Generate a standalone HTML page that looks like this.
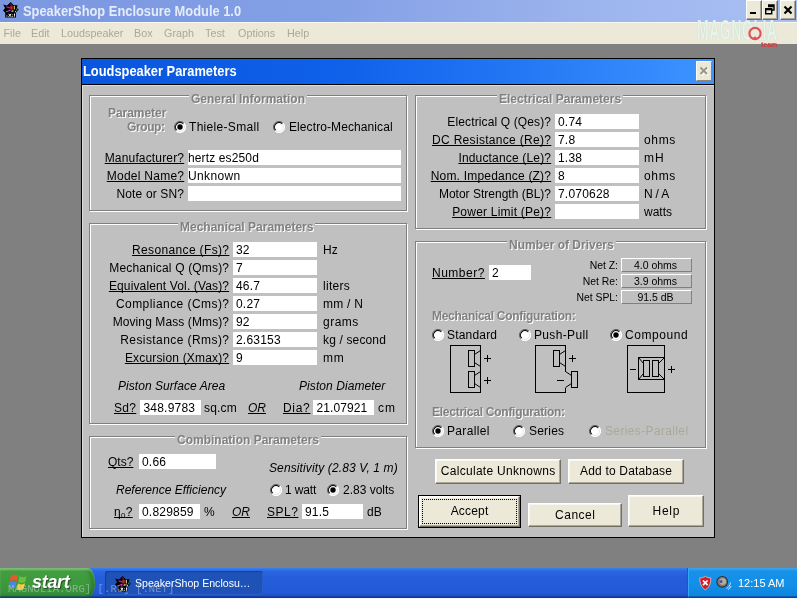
<!DOCTYPE html>
<html><head><meta charset="utf-8"><title>SpeakerShop Enclosure Module 1.0</title>
<style>
html,body{margin:0;padding:0}
body{width:797px;height:599px;overflow:hidden;position:relative;background:#808080;will-change:transform;font-family:"Liberation Sans",sans-serif;font-size:12px;color:#000;line-height:15px}
.a{position:absolute;white-space:nowrap}
.tb{left:0;top:0;width:797px;height:22px;background:linear-gradient(90deg,#7b97e0 0%,#839fe5 40%,#9fb7ef 78%,#a8bff3 100%)}
.tt{left:23px;top:2.5px;font-weight:bold;font-size:14px;color:#e4ebfb;line-height:17px;transform-origin:0 0;transform:scaleX(.919)}
.mb{left:0;top:22px;width:797px;height:22px;background:#ece9d8;box-shadow:inset 0 1px 0 #f7f6ef}
.mi{top:26px;font-size:10.8px;color:#aca899;line-height:14px}
.tbtn{width:16px;height:20px;background:#ece9d8;box-sizing:border-box;border:1px solid;border-color:#fff #6d6c62 #6d6c62 #fff;box-shadow:inset -1px -1px 0 #aca899}
.tbtn svg{position:absolute;left:-1px;top:-1px}
.dlg{left:81px;top:58px;width:634px;height:480px;background:#000}
.dt{left:82px;top:59px;width:632px;height:25px;background:linear-gradient(90deg,#0a56de 0%,#0f60ea 40%,#2478f5 70%,#3d94ff 100%)}
.dtt{left:83px;top:62.5px;font-weight:bold;font-size:14px;color:#fff;line-height:17px;transform-origin:0 0;transform:scaleX(.918)}
.db{left:82px;top:85px;width:632px;height:452px;background:#c0c0c0;box-shadow:inset 1px 1px 0 #dcdcdc}
.gb{border:1px solid #808080;box-shadow:1px 1px 0 #fff, inset 1px 1px 0 #fff;box-sizing:border-box}
.cap{font-weight:bold;color:#808080;text-shadow:1px 1px 0 #fff;background:#c0c0c0;padding:0 2px;line-height:14px}
.eg{font-weight:bold;color:#808080;text-shadow:1px 1px 0 #fff;line-height:14px}
.l{text-align:right;line-height:15px}
.dis{color:#aca899}
.u{text-decoration:underline;text-decoration-skip-ink:none;text-underline-offset:1px;text-decoration-thickness:1px}
.in{background:#fff;height:15px;line-height:17px;padding-left:3px;box-sizing:border-box}
.it{font-style:italic}
.rd{width:12px;height:12px;border-radius:50%;background:#fff;box-sizing:border-box;border:1px solid;border-color:#707070 #fff #fff #707070;box-shadow:inset 1px 1px 0 0 #000, inset -1px -1px 0 0 #dfdfdf}
.rd.on::after{content:"";position:absolute;left:2px;top:2px;width:6px;height:6px;border-radius:50%;background:#000}
.btn{background:#ece9d8;box-sizing:border-box;border:1px solid;border-color:#fff #716f64 #716f64 #fff;box-shadow:inset -1px -1px 0 #aca899, inset 1px 1px 0 #f8f7f1;text-align:center}
.ro{background:#c0c0c0;box-sizing:border-box;border:1px solid;border-color:#fff #808080 #808080 #fff;text-align:center;line-height:12px;height:14px;font-size:10.5px}
.task{left:0;top:568px;width:797px;height:31px;background:linear-gradient(180deg,#3a80f0 0%,#2a66e2 10%,#245edb 30%,#2259d6 80%,#1c48b8 100%)}
</style></head><body>

<div class="a tb"></div>
<div class="a tt">SpeakerShop Enclosure Module 1.0</div>
<div class="a mb"></div>
<div class="a mi" style="left:3.5px">File</div>
<div class="a mi" style="left:31px">Edit</div>
<div class="a mi" style="left:61px">Loudspeaker</div>
<div class="a mi" style="left:134px">Box</div>
<div class="a mi" style="left:164px">Graph</div>
<div class="a mi" style="left:205px">Test</div>
<div class="a mi" style="left:238px">Options</div>
<div class="a mi" style="left:287px">Help</div>
<svg class="a" style="left:3px;top:2px" width="16" height="16" viewBox="0 0 16 16"><path d="M.2 2.400L4 3.500 7.800 0 10.500 3 14.600 3.200 13.800 6 15.800 7.600 13 10.400V15.600H2.200V10.400L0 8.800 2 6z" fill="#000"/><path d="M3.500 4.300L8 5.600 7.600 6.800 3.400 5.600z" fill="#b020b8"/><path d="M2.800 9.600L7.400 7.400 7.800 8.600 3.600 10.200z" fill="#e838d8"/><path d="M7.200 1.500L8.400 1.200 8.800 3.400 7.800 3.600z" fill="#a01878"/><path d="M7.400 4L9.600 3.600 9.800 7.400 7.800 7.600z" fill="#d02424"/><path d="M10.800 3.800H11.800V7.600H10.800z" fill="#f2ea90"/><path d="M8.600 8.400L10.400 8.200 10.600 9.800 8.400 9.800z" fill="#e0d84a"/><path d="M13.400 6.600L14.800 6.800 14 8.600 12.800 8.200z" fill="#2c9a34"/><path d="M12 9.200h1v1h-1z" fill="#fff"/><path d="M3.400 13.600h1v1h-1zM9.200 12.400h.9v.9h-.9zM9.200 13.900h.9v.9h-.9z" fill="#fff"/><path d="M5.600 11.800l2.600 3M8.200 11.800l-2.600 3M11.500 11.600v2.200M11.500 14.300v.6" stroke="#fff" stroke-width="1" fill="none"/></svg>
<div class="a tbtn" style="left:746px;top:0px"><svg width="16" height="20" viewBox="0 0 16 20"><path d="M4 12h6v2H4z" fill="#000"/></svg></div>
<div class="a tbtn" style="left:762px;top:0px"><svg width="16" height="20" viewBox="0 0 16 20"><path d="M6 5h6v5h-2M6 6.5h6" stroke="#000" stroke-width="1.4" fill="none"/><path d="M3.7 8.7h6v5h-6z" fill="#ece9d8" stroke="#000" stroke-width="1.4"/><path d="M3.7 9.5h6" stroke="#000" stroke-width="1.6"/></svg></div>
<div class="a tbtn" style="left:780px;top:0px"><svg width="16" height="20" viewBox="0 0 16 20"><path d="M4.5 6.5l7 7M11.5 6.5l-7 7" stroke="#000" stroke-width="2.2"/></svg></div>
<div class="a" style="left:697px;top:15px;font-size:30px;line-height:30px;font-weight:bold;color:rgba(238,249,243,.88);transform-origin:0 0;transform:scaleX(.47);letter-spacing:1px;text-shadow:0 0 1px rgba(140,185,165,.7)">MAGNOLIA</div>
<svg class="a" style="left:746px;top:25px" width="18" height="18" viewBox="0 0 18 18"><circle cx="9" cy="8.5" r="5.6" fill="#ece9d8" stroke="#e0525a" stroke-width="2.2"/><circle cx="9" cy="13" r="1.6" fill="#e0525a"/></svg>
<div class="a" style="left:761px;top:41px;font-size:7px;line-height:8px;font-weight:bold;color:#d03a40">team</div>
<div class="a dlg"></div><div class="a dt"></div><div class="a dtt">Loudspeaker Parameters</div><div class="a db"></div>
<div class="a" style="left:696px;top:61px;width:16px;height:20px;background:#ece9d8;box-sizing:border-box;border:1px solid;border-color:#fff #8a887a #8a887a #fff"><svg width="14" height="18" viewBox="0 0 14 18" style="position:absolute;left:0;top:0"><path d="M4.500 6.500l6.500 6.500M11 6.500l-6.500 6.500" stroke="#fff" stroke-width="1.800"/><path d="M3.500 5.500l6.500 6.500M10 5.500l-6.500 6.500" stroke="#96948a" stroke-width="1.800"/></svg></div>
<div class="a gb" style="left:89px;top:95px;width:318px;height:116px"></div>
<div class="a cap" style="left:189px;top:93px;line-height:12px;height:12px">General Information</div>
<div class="a eg" style="left:108px;top:106px;letter-spacing:-0.05px">Parameter</div>
<div class="a eg" style="left:127px;top:120px;letter-spacing:-0.4px">Group:</div>
<svg class="a" style="left:174px;top:121px" width="12" height="12" viewBox="0 0 12 12"><circle cx="6" cy="6" r="5.5" fill="#fff"/><path d="M2.1 9.9A5.5 5.5 0 0 1 9.9 2.1" stroke="#5a5a5a" stroke-width="1" fill="none"/><path d="M9.9 2.1A5.5 5.5 0 0 1 2.1 9.9" stroke="#fff" stroke-width="1.2" fill="none"/><path d="M2.8 9.2A4.5 4.500 0 0 1 9.2 2.8" stroke="#000" fill="none" stroke-width="1.1"/><path d="M9.2 2.8A4.5 4.500 0 0 1 2.800 9.2" stroke="#e4e4e4" fill="none"/><circle cx="6" cy="6" r="2.7" fill="#000"/></svg>
<div class="a" style="left:189px;top:120px;letter-spacing:0.31px">Thiele-Small</div>
<svg class="a" style="left:273px;top:121px" width="12" height="12" viewBox="0 0 12 12"><circle cx="6" cy="6" r="5.5" fill="#fff"/><path d="M2.1 9.9A5.5 5.5 0 0 1 9.9 2.1" stroke="#5a5a5a" stroke-width="1" fill="none"/><path d="M9.9 2.1A5.5 5.5 0 0 1 2.1 9.9" stroke="#fff" stroke-width="1.2" fill="none"/><path d="M2.8 9.2A4.5 4.500 0 0 1 9.2 2.8" stroke="#000" fill="none" stroke-width="1.1"/><path d="M9.2 2.8A4.5 4.500 0 0 1 2.800 9.2" stroke="#e4e4e4" fill="none"/></svg>
<div class="a" style="left:289px;top:120px;letter-spacing:0.09px">Electro-Mechanical</div>
<div class="a l u" style="right:612.84px;top:151px;letter-spacing:0.16px">Manufacturer?</div>
<div class="a in" style="left:188px;top:150px;width:213px;padding-left:0px;letter-spacing:0.13px">hertz es250d</div>
<div class="a l u" style="right:612.74px;top:169px;letter-spacing:0.26px">Model Name?</div>
<div class="a in" style="left:188px;top:168px;width:213px;padding-left:0px;letter-spacing:0.35px">Unknown</div>
<div class="a l" style="right:612.85px;top:187px;letter-spacing:0.15px">Note or SN?</div>
<div class="a in" style="left:188px;top:186px;width:213px;padding-left:0px"></div>
<div class="a gb" style="left:89px;top:223px;width:318px;height:201px"></div>
<div class="a cap" style="left:178px;top:221px;line-height:12px;height:12px">Mechanical Parameters</div>
<div class="a l u" style="right:567.65px;top:243px;letter-spacing:0.35px">Resonance (Fs)?</div>
<div class="a in" style="left:233px;top:242px;width:84px;padding-left:3px;letter-spacing:0.2px">32</div>
<div class="a" style="left:323px;top:243px">Hz</div>
<div class="a l" style="right:567.83px;top:261px;letter-spacing:0.17px">Mechanical Q (Qms)?</div>
<div class="a in" style="left:233px;top:260px;width:84px;padding-left:3px;letter-spacing:0.2px">7</div>
<div class="a l u" style="right:567.86px;top:279px;letter-spacing:0.14px">Equivalent Vol. (Vas)?</div>
<div class="a in" style="left:233px;top:278px;width:84px;padding-left:3px;letter-spacing:0.2px">46.7</div>
<div class="a" style="left:323px;top:279px;letter-spacing:0.3px">liters</div>
<div class="a l" style="right:567.56px;top:297px;letter-spacing:0.44px">Compliance (Cms)?</div>
<div class="a in" style="left:233px;top:296px;width:84px;padding-left:3px;letter-spacing:0.2px">0.27</div>
<div class="a" style="left:323px;top:297px;letter-spacing:0.25px">mm / N</div>
<div class="a l" style="right:567.9px;top:315px;letter-spacing:0.1px">Moving Mass (Mms)?</div>
<div class="a in" style="left:233px;top:314px;width:84px;padding-left:3px;letter-spacing:0.2px">92</div>
<div class="a" style="left:323px;top:315px;letter-spacing:0.5px">grams</div>
<div class="a l" style="right:567.58px;top:333px;letter-spacing:0.42px">Resistance (Rms)?</div>
<div class="a in" style="left:233px;top:332px;width:84px;padding-left:3px;letter-spacing:0.2px">2.63153</div>
<div class="a" style="left:323px;top:333px;letter-spacing:0.15px">kg / second</div>
<div class="a l u" style="right:567.83px;top:351px;letter-spacing:0.17px">Excursion (Xmax)?</div>
<div class="a in" style="left:233px;top:350px;width:84px;padding-left:3px;letter-spacing:0.2px">9</div>
<div class="a" style="left:323px;top:351px;letter-spacing:0.8px">mm</div>
<div class="a it" style="left:118px;top:379px;letter-spacing:0.05px">Piston Surface Area</div>
<div class="a it" style="left:299px;top:379px;letter-spacing:0.07px">Piston Diameter</div>
<div class="a u" style="left:114px;top:401px;letter-spacing:0.3px">Sd?</div>
<div class="a in" style="left:140px;top:400px;width:61px;padding-left:3.5px;letter-spacing:0.2px">348.9783</div>
<div class="a" style="left:204px;top:401px;letter-spacing:0.2px">sq.cm</div>
<div class="a it u" style="left:248px;top:401px">OR</div>
<div class="a u" style="left:283px;top:401px;letter-spacing:0.7px">Dia?</div>
<div class="a in" style="left:313px;top:400px;width:61px;padding-left:3.5px;letter-spacing:0.1px">21.07921</div>
<div class="a" style="left:378px;top:401px;letter-spacing:1px">cm</div>
<div class="a gb" style="left:89px;top:436px;width:318px;height:93px"></div>
<div class="a cap" style="left:175px;top:434px;line-height:12px;height:12px">Combination Parameters</div>
<div class="a u" style="left:108px;top:455px">Qts?</div>
<div class="a in" style="left:139px;top:454px;width:77px;padding-left:3px;letter-spacing:0.2px">0.66</div>
<div class="a it" style="left:269px;top:461px;letter-spacing:0.12px">Sensitivity (2.83 V, 1 m)</div>
<div class="a it" style="left:116px;top:483px">Reference Efficiency</div>
<svg class="a" style="left:270px;top:484px" width="12" height="12" viewBox="0 0 12 12"><circle cx="6" cy="6" r="5.5" fill="#fff"/><path d="M2.1 9.9A5.5 5.5 0 0 1 9.9 2.1" stroke="#5a5a5a" stroke-width="1" fill="none"/><path d="M9.9 2.1A5.5 5.5 0 0 1 2.1 9.9" stroke="#fff" stroke-width="1.2" fill="none"/><path d="M2.8 9.2A4.5 4.500 0 0 1 9.2 2.8" stroke="#000" fill="none" stroke-width="1.1"/><path d="M9.2 2.8A4.5 4.500 0 0 1 2.800 9.2" stroke="#e4e4e4" fill="none"/></svg>
<div class="a" style="left:285px;top:483px;letter-spacing:-0.15px">1 watt</div>
<svg class="a" style="left:327px;top:484px" width="12" height="12" viewBox="0 0 12 12"><circle cx="6" cy="6" r="5.5" fill="#fff"/><path d="M2.1 9.9A5.5 5.5 0 0 1 9.9 2.1" stroke="#5a5a5a" stroke-width="1" fill="none"/><path d="M9.9 2.1A5.5 5.5 0 0 1 2.1 9.9" stroke="#fff" stroke-width="1.2" fill="none"/><path d="M2.8 9.2A4.5 4.500 0 0 1 9.2 2.8" stroke="#000" fill="none" stroke-width="1.1"/><path d="M9.2 2.8A4.5 4.500 0 0 1 2.800 9.2" stroke="#e4e4e4" fill="none"/><circle cx="6" cy="6" r="2.7" fill="#000"/></svg>
<div class="a" style="left:343px;top:483px">2.83 volts</div>
<div class="a u" style="left:114px;top:505px;letter-spacing:0.3px">&eta;<span style="font-size:8px;vertical-align:-2px">0</span>?</div>
<div class="a in" style="left:139px;top:504px;width:61px;padding-left:3px;letter-spacing:0.2px">0.829859</div>
<div class="a" style="left:204px;top:505px">%</div>
<div class="a it u" style="left:232px;top:505px">OR</div>
<div class="a u" style="left:267px;top:505px;letter-spacing:0.5px">SPL?</div>
<div class="a in" style="left:302px;top:504px;width:61px;padding-left:3px;letter-spacing:0.2px">91.5</div>
<div class="a" style="left:367px;top:505px">dB</div>
<div class="a gb" style="left:415px;top:95px;width:291px;height:134px"></div>
<div class="a cap" style="left:497px;top:93px;line-height:12px;height:12px">Electrical Parameters</div>
<div class="a l" style="right:245.87px;top:115px;letter-spacing:0.13px">Electrical Q (Qes)?</div>
<div class="a in" style="left:555px;top:114px;width:84px;padding-left:3px;letter-spacing:0.2px">0.74</div>
<div class="a l u" style="right:245.69px;top:133px;letter-spacing:0.31px">DC Resistance (Re)?</div>
<div class="a in" style="left:555px;top:132px;width:84px;padding-left:3px;letter-spacing:0.2px">7.8</div>
<div class="a" style="left:644px;top:133px;letter-spacing:0.67px">ohms</div>
<div class="a l u" style="right:245.83px;top:151px;letter-spacing:0.17px">Inductance (Le)?</div>
<div class="a in" style="left:555px;top:150px;width:84px;padding-left:3px;letter-spacing:0.2px">1.38</div>
<div class="a" style="left:644px;top:151px;letter-spacing:1px">mH</div>
<div class="a l u" style="right:245.8px;top:169px;letter-spacing:0.2px">Nom. Impedance (Z)?</div>
<div class="a in" style="left:555px;top:168px;width:84px;padding-left:3px;letter-spacing:0.2px">8</div>
<div class="a" style="left:644px;top:169px;letter-spacing:0.67px">ohms</div>
<div class="a l" style="right:246px;top:187px">Motor Strength (BL)?</div>
<div class="a in" style="left:555px;top:186px;width:84px;padding-left:3px;letter-spacing:0.2px">7.070628</div>
<div class="a" style="left:644px;top:187px;letter-spacing:-0.2px">N / A</div>
<div class="a l u" style="right:245.78px;top:205px;letter-spacing:0.22px">Power Limit (Pe)?</div>
<div class="a in" style="left:555px;top:204px;width:84px;padding-left:3px"></div>
<div class="a" style="left:644px;top:205px">watts</div>
<div class="a gb" style="left:415px;top:241px;width:291px;height:207px"></div>
<div class="a cap" style="left:507px;top:239px;line-height:12px;height:12px">Number of Drivers</div>
<div class="a u" style="left:432px;top:266px;letter-spacing:0.5px">Number?</div>
<div class="a in" style="left:489px;top:265px;width:42px;padding-left:3px;letter-spacing:0.2px">2</div>
<div class="a l" style="right:179px;top:259px;font-size:10.4px;line-height:14px">Net Z:</div>
<div class="a ro" style="left:621px;top:258px;width:71px;padding-right:2px">4.0 ohms</div>
<div class="a l" style="right:179px;top:275px;font-size:10.4px;line-height:14px">Net Re:</div>
<div class="a ro" style="left:621px;top:274px;width:71px;padding-right:2px">3.9 ohms</div>
<div class="a l" style="right:179px;top:291px;font-size:10.4px;line-height:14px">Net SPL:</div>
<div class="a ro" style="left:621px;top:290px;width:71px;padding-right:2px">91.5 dB</div>
<div class="a eg" style="left:432px;top:309px;letter-spacing:-0.29px">Mechanical Configuration:</div>
<svg class="a" style="left:432px;top:329px" width="12" height="12" viewBox="0 0 12 12"><circle cx="6" cy="6" r="5.5" fill="#fff"/><path d="M2.1 9.9A5.5 5.5 0 0 1 9.9 2.1" stroke="#5a5a5a" stroke-width="1" fill="none"/><path d="M9.9 2.1A5.5 5.5 0 0 1 2.1 9.9" stroke="#fff" stroke-width="1.2" fill="none"/><path d="M2.8 9.2A4.5 4.500 0 0 1 9.2 2.8" stroke="#000" fill="none" stroke-width="1.1"/><path d="M9.2 2.8A4.5 4.500 0 0 1 2.800 9.2" stroke="#e4e4e4" fill="none"/></svg>
<div class="a" style="left:447px;top:328px;letter-spacing:0.19px">Standard</div>
<svg class="a" style="left:519px;top:329px" width="12" height="12" viewBox="0 0 12 12"><circle cx="6" cy="6" r="5.5" fill="#fff"/><path d="M2.1 9.9A5.5 5.5 0 0 1 9.9 2.1" stroke="#5a5a5a" stroke-width="1" fill="none"/><path d="M9.9 2.1A5.5 5.5 0 0 1 2.1 9.9" stroke="#fff" stroke-width="1.2" fill="none"/><path d="M2.8 9.2A4.5 4.500 0 0 1 9.2 2.8" stroke="#000" fill="none" stroke-width="1.1"/><path d="M9.2 2.8A4.5 4.500 0 0 1 2.800 9.2" stroke="#e4e4e4" fill="none"/></svg>
<div class="a" style="left:534px;top:328px;letter-spacing:0.34px">Push-Pull</div>
<svg class="a" style="left:610px;top:329px" width="12" height="12" viewBox="0 0 12 12"><circle cx="6" cy="6" r="5.5" fill="#fff"/><path d="M2.1 9.9A5.5 5.5 0 0 1 9.9 2.1" stroke="#5a5a5a" stroke-width="1" fill="none"/><path d="M9.9 2.1A5.5 5.5 0 0 1 2.1 9.9" stroke="#fff" stroke-width="1.2" fill="none"/><path d="M2.8 9.2A4.5 4.500 0 0 1 9.2 2.8" stroke="#000" fill="none" stroke-width="1.1"/><path d="M9.2 2.8A4.5 4.500 0 0 1 2.800 9.2" stroke="#e4e4e4" fill="none"/><circle cx="6" cy="6" r="2.7" fill="#000"/></svg>
<div class="a" style="left:625px;top:328px;letter-spacing:0.57px">Compound</div>
<svg class="a" style="left:445px;top:340px" width="240" height="60" viewBox="445 340 240 60" fill="none" stroke="#000" stroke-width="1" shape-rendering="crispEdges"><rect x="450.5" y="345.5" width="30" height="47"/><rect x="468.5" y="350.5" width="6" height="16"/><rect x="468.5" y="371.5" width="6" height="16"/><g shape-rendering="auto"><path d="M474.5 354.5L480.5 350.5M474.5 362.5L480.5 366.5M474.5 375.5L480.5 371.5M474.5 383.5L480.5 387.5"/></g><path d="M483.5 358h7M487 354.5v7M483.5 380h7M487 376.5v7"/><path d="M565.5 371.5V345.5H535.5V392.5H565.5V387.5"/><rect x="553.5" y="350.5" width="6" height="16"/><rect x="571.5" y="371.5" width="6" height="16"/><g shape-rendering="auto"><path d="M559.5 354.5L565.5 350.5M559.5 362.5L565.5 366.5M565.5 371.5L571.5 375.5M565.5 387.5L571.5 383.5"/></g><path d="M568.5 358h7M572 354.5v7M556.5 380h7"/><rect x="627.5" y="345.5" width="37" height="47"/><rect x="638.5" y="357.5" width="26" height="22"/><rect x="643.5" y="360.5" width="6" height="16"/><rect x="652.5" y="360.5" width="6" height="16"/><g shape-rendering="auto"><path d="M638.5 357.5L643.5 363.5M638.5 379.5L643.5 373.5M658.5 363.5L664.5 357.5M658.5 373.5L664.5 379.5"/></g><path d="M630 369h6M667.5 369h7M671 365.5v7"/></svg>
<div class="a eg" style="left:432px;top:405px;letter-spacing:-0.26px">Electrical Configuration:</div>
<svg class="a" style="left:432px;top:425px" width="12" height="12" viewBox="0 0 12 12"><circle cx="6" cy="6" r="5.5" fill="#fff"/><path d="M2.1 9.9A5.5 5.5 0 0 1 9.9 2.1" stroke="#5a5a5a" stroke-width="1" fill="none"/><path d="M9.9 2.1A5.5 5.5 0 0 1 2.1 9.9" stroke="#fff" stroke-width="1.2" fill="none"/><path d="M2.8 9.2A4.5 4.500 0 0 1 9.2 2.8" stroke="#000" fill="none" stroke-width="1.1"/><path d="M9.2 2.8A4.5 4.500 0 0 1 2.800 9.2" stroke="#e4e4e4" fill="none"/><circle cx="6" cy="6" r="2.7" fill="#000"/></svg>
<div class="a" style="left:447px;top:424px;letter-spacing:0.33px">Parallel</div>
<svg class="a" style="left:513px;top:425px" width="12" height="12" viewBox="0 0 12 12"><circle cx="6" cy="6" r="5.5" fill="#fff"/><path d="M2.1 9.9A5.5 5.5 0 0 1 9.9 2.1" stroke="#5a5a5a" stroke-width="1" fill="none"/><path d="M9.9 2.1A5.5 5.5 0 0 1 2.1 9.9" stroke="#fff" stroke-width="1.2" fill="none"/><path d="M2.8 9.2A4.5 4.500 0 0 1 9.2 2.8" stroke="#000" fill="none" stroke-width="1.1"/><path d="M9.2 2.8A4.5 4.500 0 0 1 2.800 9.2" stroke="#e4e4e4" fill="none"/></svg>
<div class="a" style="left:529px;top:424px;letter-spacing:0.2px">Series</div>
<svg class="a" style="left:589px;top:425px" width="12" height="12" viewBox="0 0 12 12"><circle cx="6" cy="6" r="5.5" fill="#fff"/><path d="M2.1 9.9A5.5 5.5 0 0 1 9.9 2.1" stroke="#5a5a5a" stroke-width="1" fill="none"/><path d="M9.9 2.1A5.5 5.5 0 0 1 2.1 9.9" stroke="#fff" stroke-width="1.2" fill="none"/><path d="M2.8 9.2A4.5 4.500 0 0 1 9.2 2.8" stroke="#000" fill="none" stroke-width="1.1"/><path d="M9.2 2.8A4.5 4.500 0 0 1 2.800 9.2" stroke="#e4e4e4" fill="none"/></svg>
<div class="a dis" style="left:605px;top:424px;letter-spacing:0.36px">Series-Parallel</div>
<div class="a btn" style="left:435px;top:459px;width:126px;height:25px;line-height:23px;text-indent:0.3px;letter-spacing:0.3px">Calculate Unknowns</div>
<div class="a btn" style="left:568px;top:459px;width:116px;height:25px;line-height:23px;text-indent:0.17px;letter-spacing:0.17px">Add to Database</div>
<div class="a" style="left:418px;top:495px;width:103px;height:33px;background:#000"></div>
<div class="a btn" style="left:419px;top:496px;width:101px;height:31px;line-height:29px;text-indent:0.2px;letter-spacing:0.2px">Accept</div>
<div class="a" style="left:422px;top:499px;width:95px;height:25px;border:1px dotted #000;box-sizing:border-box"></div>
<div class="a btn" style="left:528px;top:503px;width:94px;height:24px;line-height:22px;text-indent:0.5px;letter-spacing:0.5px">Cancel</div>
<div class="a btn" style="left:628px;top:495px;width:76px;height:32px;line-height:30px;text-indent:0.7px;letter-spacing:0.7px">Help</div>
<div class="a task"></div>
<div class="a" style="left:0;top:568px;width:95px;height:30px;border-radius:0 7px 7px 0/0 15px 15px 0;background:linear-gradient(180deg,#5fae5c 0%,#429e41 12%,#3c993c 50%,#37913a 85%,#2d7c31 100%);box-shadow:inset 0 2px 2px rgba(160,220,150,.55), inset -3px 0 4px rgba(20,70,20,.45)"></div>
<svg class="a" style="left:9px;top:573px" width="20" height="18" viewBox="0 0 20 18"><path d="M2 2.5c2.5-1.5 4.5-1.5 7 0l-1.3 5.7c-2.3-1.3-4.4-1.3-6.9 0z" fill="#e8582a"/><path d="M10.5 3.2c2.5 1.5 4.5 1.5 7 0l-1.3 5.7c-2.5 1.5-4.5 1.5-6.9 0z" fill="#6cbf3c"/><path d="M.6 9.6c2.5-1.5 4.5-1.5 7 0l-1.3 5.7c-2.3-1.3-4.4-1.3-6.9 0z" fill="#4a86e8"/><path d="M9 10.3c2.5 1.5 4.5 1.5 7 0l-1.3 5.7c-2.5 1.5-4.5 1.5-6.9 0z" fill="#f2c53a"/></svg>
<div class="a" style="left:32px;top:571px;font-size:18px;line-height:22px;font-weight:bold;font-style:italic;color:#fff;text-shadow:1px 1px 1px rgba(0,0,0,.5);letter-spacing:-.3px">start</div>
<div class="a" style="left:105px;top:571px;width:158px;height:24px;border-radius:3px;background:#1e52b7;box-shadow:inset 1px 1px 1px #173f96, inset -1px -1px 0 #2a5fcb"></div>
<svg class="a" style="left:115px;top:576px" width="16" height="16" viewBox="0 0 16 16"><path d="M.2 2.400L4 3.500 7.800 0 10.500 3 14.600 3.200 13.800 6 15.800 7.600 13 10.400V15.600H2.200V10.400L0 8.800 2 6z" fill="#000"/><path d="M3.500 4.300L8 5.600 7.600 6.800 3.400 5.600z" fill="#b020b8"/><path d="M2.800 9.600L7.400 7.400 7.800 8.600 3.600 10.200z" fill="#e838d8"/><path d="M7.200 1.500L8.400 1.200 8.800 3.400 7.800 3.600z" fill="#a01878"/><path d="M7.400 4L9.600 3.600 9.800 7.400 7.800 7.600z" fill="#d02424"/><path d="M10.800 3.800H11.800V7.600H10.800z" fill="#f2ea90"/><path d="M8.600 8.400L10.400 8.200 10.600 9.800 8.400 9.800z" fill="#e0d84a"/><path d="M13.400 6.600L14.800 6.800 14 8.600 12.800 8.200z" fill="#2c9a34"/><path d="M12 9.200h1v1h-1z" fill="#fff"/><path d="M3.400 13.600h1v1h-1zM9.200 12.400h.9v.9h-.9zM9.200 13.900h.9v.9h-.9z" fill="#fff"/><path d="M5.600 11.800l2.600 3M8.200 11.800l-2.600 3M11.500 11.600v2.200M11.500 14.300v.6" stroke="#fff" stroke-width="1" fill="none"/></svg>
<div class="a" style="left:135px;top:576px;font-size:10.6px;line-height:14px;color:#fff">SpeakerShop Enclosu&hellip;</div>
<div class="a" style="left:687px;top:568px;width:110px;height:31px;background:linear-gradient(180deg,#3aa5f0 0%,#1790e8 12%,#1290e8 50%,#0f84de 90%,#0c6fc4 100%);box-shadow:inset 1px 0 0 #0c5fc0, inset 2px 0 0 #35a5f5"></div>
<svg class="a" style="left:697px;top:575px" width="40" height="18" viewBox="0 0 40 18"><path d="M8.300 1.300c1.800 1.300 3.700 1.600 5.500 1.600 0 5.600-1.400 9.200-5.500 12-4.100-2.800-5.500-6.400-5.500-12 1.800 0 3.700-.3 5.500-1.600z" fill="#cc2026" stroke="#f0c0c0" stroke-width=".8"/><path d="M6 5.500l4.600 4.600M10.600 5.500l-4.600 4.600" stroke="#fff" stroke-width="1.700"/><circle cx="25.200" cy="6.800" r="5.300" fill="#7c7c72" stroke="#2e2e36" stroke-width="1.100"/><circle cx="25.800" cy="6.600" r="3.300" fill="#b0ae9c"/><circle cx="24" cy="6.400" r="1.500" fill="#5a4c92"/><path d="M29.500 13.500c2-1 3.500-3 4-6M31 14.500c1.500-.8 2.600-2 3.200-3.600" stroke="#d4e2ff" stroke-width="1" fill="none"/></svg>
<div class="a" style="left:738px;top:576px;font-size:11px;line-height:14px;color:#fff">12:15 AM</div>
<div class="a" style="left:8px;top:583px;font-family:'Liberation Mono',monospace;font-size:10.500px;line-height:12px;color:rgba(225,230,235,.42);letter-spacing:.1px">MAGNOLIA.ORG] [.RU] [.NET]</div>
<div class="a" style="left:0;top:596px;width:797px;height:2px;background:linear-gradient(180deg,rgba(14,44,140,.35),rgba(12,40,135,.75))"></div><div class="a" style="left:0;top:598px;width:797px;height:1px;background:#f4f8ff"></div>
</body></html>
